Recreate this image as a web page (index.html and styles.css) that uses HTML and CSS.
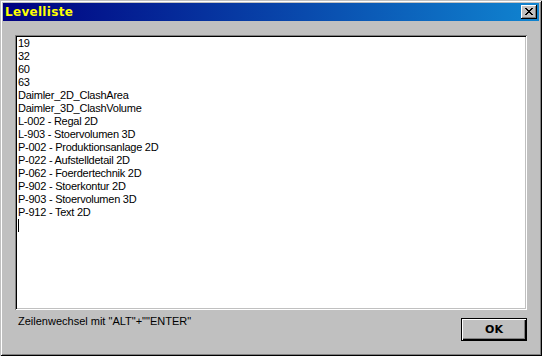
FILE: index.html
```html
<!DOCTYPE html>
<html>
<head>
<meta charset="utf-8">
<link rel="stylesheet" href="styles.css">
</head>
<body>
<div class="window">
  <div class="titlebar">
    <span class="title">Levelliste</span>
    <button class="close" aria-label="Schließen">
      <svg width="8" height="7" viewBox="0 0 8 7" shape-rendering="crispEdges">
        <path d="M0 0h2v1H0zM6 0h2v1H6zM1 1h2v1H1zM5 1h2v1H5zM2 2h4v1H2zM3 3h2v1H3zM2 4h4v1H2zM1 5h2v1H1zM5 5h2v1H5zM0 6h2v1H0zM6 6h2v1H6z" fill="#000"/>
      </svg>
    </button>
  </div>
  <div class="client">
    <div class="edit">
      <div class="line">19</div>
      <div class="line">32</div>
      <div class="line">60</div>
      <div class="line">63</div>
      <div class="line">Daimler_2D_ClashArea</div>
      <div class="line">Daimler_3D_ClashVolume</div>
      <div class="line">L-002 - Regal 2D</div>
      <div class="line">L-903 - Stoervolumen 3D</div>
      <div class="line">P-002 - Produktionsanlage 2D</div>
      <div class="line">P-022 - Aufstelldetail 2D</div>
      <div class="line">P-062 - Foerdertechnik 2D</div>
      <div class="line">P-902 - Stoerkontur 2D</div>
      <div class="line">P-903 - Stoervolumen 3D</div>
      <div class="line">P-912 - Text 2D</div>
      <div class="line"><span class="caret"></span></div>
    </div>
    <div class="footer">
      <span class="hint">Zeilenwechsel mit "ALT"+""ENTER"</span>
      <button class="ok">OK</button>
    </div>
  </div>
</div>
</body>
</html>
```

FILE: styles.css
```css
html, body {
  margin: 0;
  padding: 0;
  background: #c0c0c0;
}

.window {
  width: 542px;
  height: 356px;
  box-sizing: border-box;
  padding: 3px;
  background: #c0c0c0;
  box-shadow: inset 1px 1px 0 #c0c0c0, inset -1px -1px 0 #000000,
              inset 2px 2px 0 #ffffff, inset -2px -2px 0 #808080;
  display: flex;
  flex-direction: column;
  font-family: "Liberation Sans", Arial, sans-serif;
  font-size: 11px;
  color: #000;
}

.titlebar {
  height: 18px;
  background: linear-gradient(to right, #000080, #1084d0);
  display: flex;
  align-items: center;
  justify-content: space-between;
  padding: 0 2px 0 2px;
}

.title {
  color: #ffff00;
  font-family: "DejaVu Sans", "Liberation Sans", sans-serif;
  font-weight: bold;
  font-size: 12px;
  letter-spacing: 0.3px;
}

.close {
  width: 16px;
  height: 14px;
  padding: 0;
  margin: 0;
  border: none;
  background: #c0c0c0;
  box-shadow: inset -1px -1px 0 #000000, inset 1px 1px 0 #ffffff,
              inset -2px -2px 0 #808080;
  display: flex;
  align-items: center;
  justify-content: center;
}

.close svg {
  display: block;
  margin: 0 1px 1px 0;
}

.client {
  flex: 1;
  display: flex;
  flex-direction: column;
  padding: 14px 12px 0 12px;
}

.edit {
  height: 275px;
  box-sizing: border-box;
  background: #ffffff;
  padding: 2px 3px;
  letter-spacing: -0.25px;
  box-shadow: inset 1px 1px 0 #808080, inset -1px -1px 0 #ffffff,
              inset 2px 2px 0 #000000, inset -2px -2px 0 #c0c0c0;
}

.line {
  height: 13px;
  line-height: 13px;
  white-space: pre;
}

.caret {
  display: inline-block;
  width: 1px;
  height: 13px;
  background: #000;
  vertical-align: top;
}

.footer {
  display: flex;
  justify-content: space-between;
  align-items: flex-start;
  padding: 5px 0 0 3px;
}

.hint {
  line-height: 13px;
}

.ok {
  width: 66px;
  height: 23px;
  margin-top: 3px;
  padding: 0;
  border: 1px solid #000;
  background: #c0c0c0;
  box-shadow: inset 1px 1px 0 #ffffff, inset -1px -1px 0 #000000,
              inset -2px -2px 0 #808080;
  font-family: "DejaVu Sans", "Liberation Sans", sans-serif;
  font-weight: bold;
  font-size: 11px;
  color: #000;
}
```
